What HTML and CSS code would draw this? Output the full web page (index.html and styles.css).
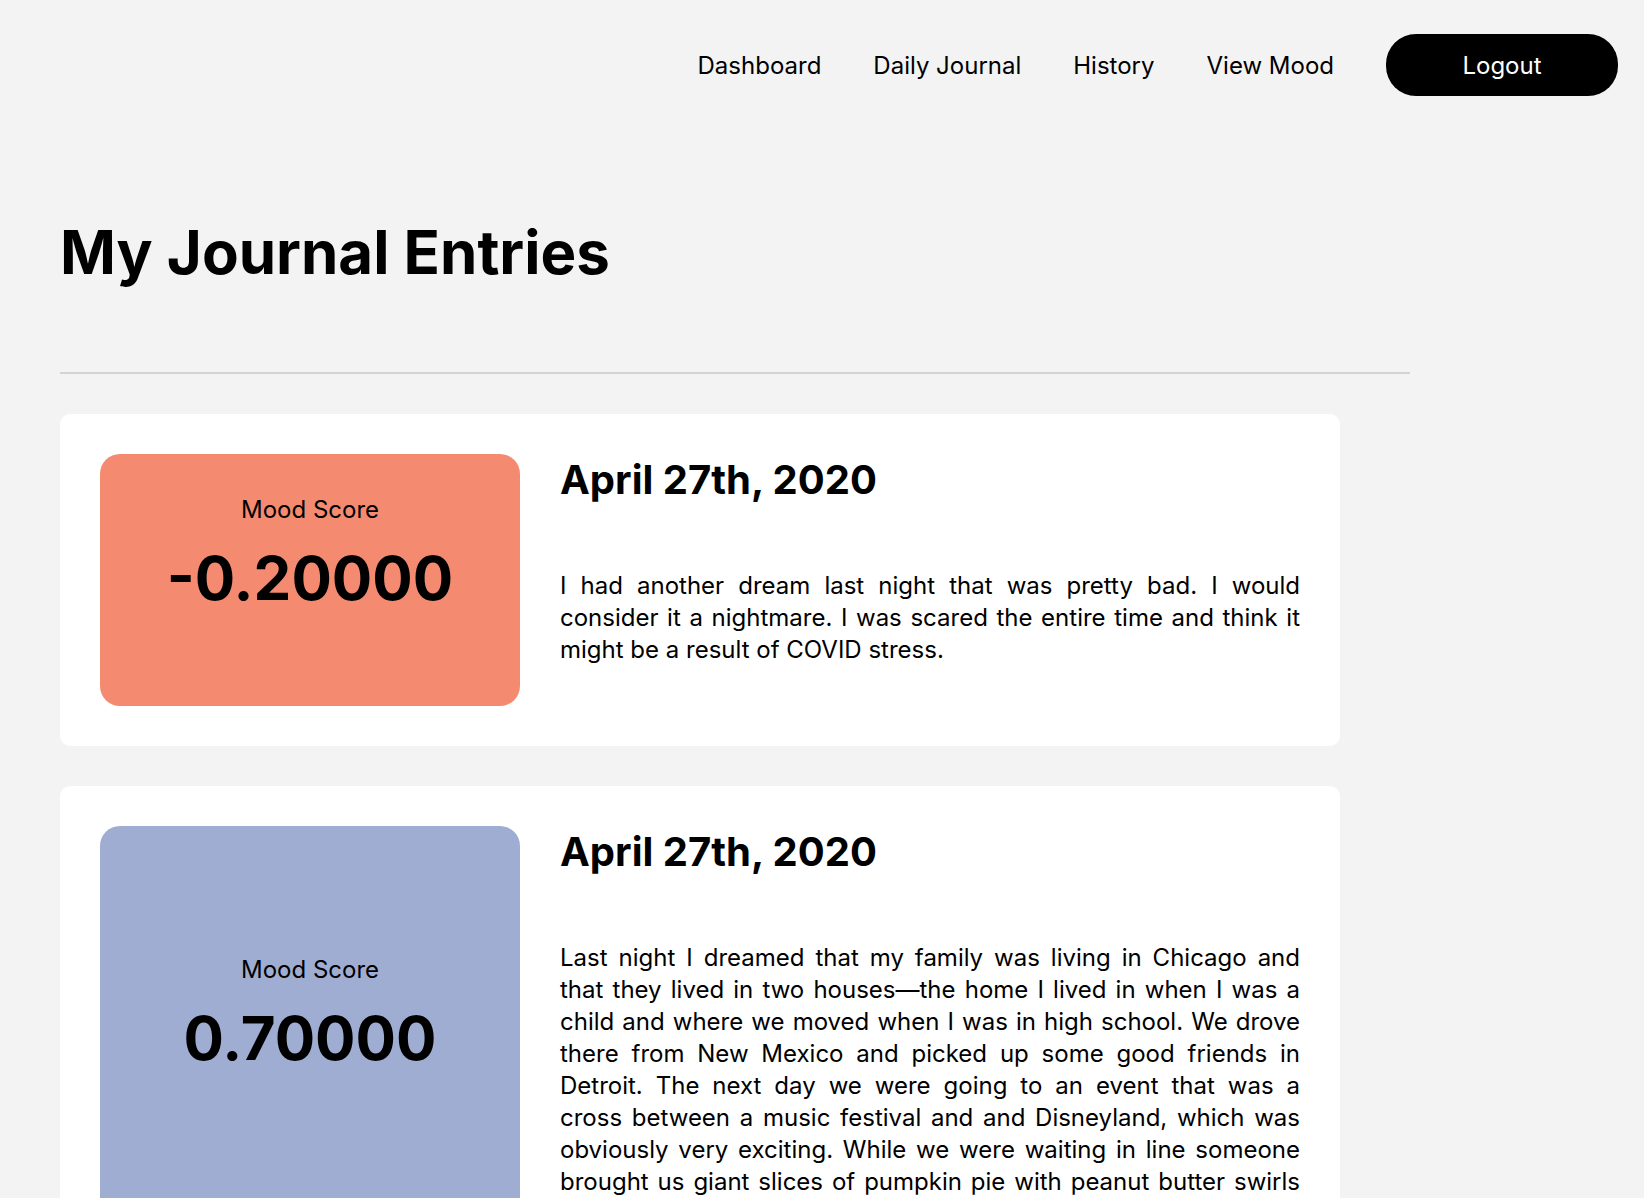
FILE: index.html
```html
<!DOCTYPE html>
<html lang="en">
<head>
  <meta charset="utf-8">
  <meta name="viewport" content="width=device-width, initial-scale=1">
  <title>My Journal Entries</title>
  <link rel="stylesheet" href="styles.css">
</head>
<body>
  <header class="site-header">
    <nav class="site-nav">
      <a class="nav-link" href="#dashboard">Dashboard</a>
      <a class="nav-link" href="#journal">Daily Journal</a>
      <a class="nav-link" href="#history">History</a>
      <a class="nav-link" href="#mood">View Mood</a>
      <button class="logout" type="button">Logout</button>
    </nav>
  </header>
  <main class="page">
    <h1 class="page-title">My Journal Entries</h1>
    <hr class="divider">
    <div class="entries">
      <article class="entry">
        <div class="mood mood-negative">
          <p class="mood-label">Mood Score</p>
          <p class="mood-score">-0.20000</p>
        </div>
        <div class="entry-body">
          <h2 class="entry-date">April 27th, 2020</h2>
          <p class="entry-text">I had another dream last night that was pretty bad. I would consider it a nightmare. I was scared the entire time and think it might be a result of COVID stress.</p>
        </div>
      </article>
      <article class="entry">
        <div class="mood mood-positive">
          <p class="mood-label">Mood Score</p>
          <p class="mood-score">0.70000</p>
        </div>
        <div class="entry-body">
          <h2 class="entry-date">April 27th, 2020</h2>
          <p class="entry-text entry-text-full">Last night I dreamed that my family was living in Chicago and that they lived in two houses—the home I lived in when I was a child and where we moved when I was in high school. We drove there from New Mexico and picked up some good friends in Detroit. The next day we were going to an event that was a cross&nbsp;between a music festival and and Disneyland, which was obviously very exciting. While we were waiting in line someone brought us giant slices of pumpkin pie with peanut butter swirls</p>
        </div>
      </article>
    </div>
  </main>
</body>
</html>
```
FILE: styles.css
```css
* {
  box-sizing: border-box;
}

body {
  margin: 0;
  background: #f3f3f3;
  color: #000;
  font-family: Inter, "Open Sans", sans-serif;
  font-size: 24px;
  line-height: 32px;
}

h1, h2, p {
  margin: 0;
}

.site-header {
  padding: 34px 26px;
}

.site-nav {
  display: flex;
  align-items: center;
  justify-content: flex-end;
  gap: 52px;
}

.nav-link {
  padding-top: 2px;
  color: inherit;
  text-decoration: none;
}

.logout {
  width: 232px;
  height: 62px;
  padding: 2px 0 0;
  border: 0;
  border-radius: 30px;
  background: #000;
  color: #fff;
  font: inherit;
}

.page {
  max-width: 1470px;
  padding: 82px 60px 40px;
}

.page-title {
  font-size: 60px;
  line-height: 80px;
}

.divider {
  height: 2px;
  margin: 80px 0 40px;
  border: 0;
  background: #d3d3d3;
}

.entries {
  display: grid;
  gap: 40px;
  max-width: 1280px;
}

.entry {
  display: flex;
  gap: 40px;
  padding: 40px;
  border-radius: 10px;
  background: #fff;
}

.mood {
  display: flex;
  flex: 0 0 420px;
  flex-direction: column;
  justify-content: center;
  gap: 20px;
  min-height: 252px;
  padding-bottom: 56px;
  border-radius: 20px;
  text-align: center;
}

.mood-negative {
  background: #f48b71;
}

.mood-positive {
  min-height: 428px;
  background: #9fadd2;
}

.mood-score {
  font-size: 60px;
  font-weight: 700;
  line-height: 64px;
}

.entry-body {
  flex: 1;
  min-width: 0;
}

.entry-date {
  font-size: 40px;
  line-height: 52px;
}

.entry-text {
  margin-top: 64px;
  text-align: justify;
}

.entry-text-full {
  text-align-last: justify;
}
```
